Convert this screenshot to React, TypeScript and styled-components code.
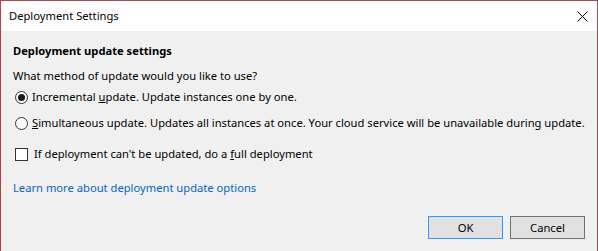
import React from 'react';
import styled, { createGlobalStyle } from 'styled-components';

const GlobalStyle = createGlobalStyle`
  html, body {
    margin: 0;
    padding: 0;
    background: #f0f0f0;
  }
  body {
    font-family: 'Noto Sans', 'Open Sans', sans-serif;
    font-size: 11.2px;
    color: #000;
  }
`;

const Window = styled.div`
  width: 598px;
  height: 251px;
  box-sizing: border-box;
  border: 1px solid #a54a4a;
  border-bottom: none;
  background: #f0f0f0;
  display: flex;
  flex-direction: column;
`;

const TitleBar = styled.div`
  height: 30px;
  background: #fff;
  display: flex;
  align-items: center;
  justify-content: space-between;
  padding: 0 9px 0 8px;
`;

const Title = styled.span`
  line-height: 16px;
`;

const CloseButton = styled.button`
  width: 12px;
  height: 12px;
  padding: 0;
  border: none;
  background: transparent;
  display: flex;
  align-items: center;
  justify-content: center;
`;

const Body = styled.div`
  flex: 1;
  display: flex;
  flex-direction: column;
  padding: 0 12px 0 12px;
`;

const Line = styled.div<{ $top: number }>`
  margin-top: ${(p) => p.$top}px;
  line-height: 16px;
  white-space: nowrap;
`;

const Heading = styled(Line)`
  font-weight: bold;
`;

const Option = styled.label<{ $top: number; $gap: number }>`
  margin-top: ${(p) => p.$top}px;
  display: flex;
  align-items: center;
  gap: ${(p) => p.$gap}px;
  padding-left: 2px;
  line-height: 16px;
  white-space: nowrap;
`;

const Radio = styled.span<{ $checked?: boolean }>`
  width: 13px;
  height: 13px;
  box-sizing: border-box;
  border: 1px solid #333;
  border-radius: 50%;
  background: #fff;
  display: flex;
  align-items: center;
  justify-content: center;
  flex: none;
  &::after {
    content: '';
    width: 7px;
    height: 7px;
    border-radius: 50%;
    background: ${(p) => (p.$checked ? '#1a1a1a' : 'transparent')};
  }
`;

const Checkbox = styled.span`
  width: 13px;
  height: 13px;
  box-sizing: border-box;
  border: 1px solid #333;
  background: #fff;
  flex: none;
`;

const Link = styled.a`
  margin-top: 18px;
  line-height: 16px;
  color: #0066cc;
  text-decoration: none;
  align-self: flex-start;
`;

const Footer = styled.div`
  margin-top: 20px;
  display: flex;
  justify-content: flex-end;
  gap: 7px;
`;

const Button = styled.button<{ $primary?: boolean }>`
  width: 75px;
  height: 23px;
  box-sizing: border-box;
  border: 1px solid ${(p) => (p.$primary ? '#3399ff' : '#707070')};
  background: #e1e1e1;
  font-family: inherit;
  font-size: 11.2px;
  color: #000;
  padding: 0;
`;

export default function App() {
  return (
    <>
      <GlobalStyle />
      <Window>
        <TitleBar>
          <Title>Deployment Settings</Title>
          <CloseButton aria-label="Close">
            <svg width="11" height="11" viewBox="0 0 11 11">
              <path d="M0.5 0.5 L10.5 10.5 M10.5 0.5 L0.5 10.5" stroke="#000" strokeWidth="1" />
            </svg>
          </CloseButton>
        </TitleBar>
        <Body>
          <Heading $top={12}>Deployment update settings</Heading>
          <Line $top={9}>What method of update would you like to use?</Line>
          <Option $top={5} $gap={4}>
            <Radio $checked />
            <span>
              Incremental <u>u</u>pdate. Update instances one by one.
            </span>
          </Option>
          <Option $top={10} $gap={4}>
            <Radio />
            <span>
              <u>S</u>imultaneous update. Updates all instances at once. Your cloud service will be unavailable during update.
            </span>
          </Option>
          <Option $top={15} $gap={6}>
            <Checkbox />
            <span>
              If deployment can't be updated, do a <u>f</u>ull deployment
            </span>
          </Option>
          <Link href="#">Learn more about deployment update options</Link>
          <Footer>
            <Button $primary>OK</Button>
            <Button>Cancel</Button>
          </Footer>
        </Body>
      </Window>
    </>
  );
}
